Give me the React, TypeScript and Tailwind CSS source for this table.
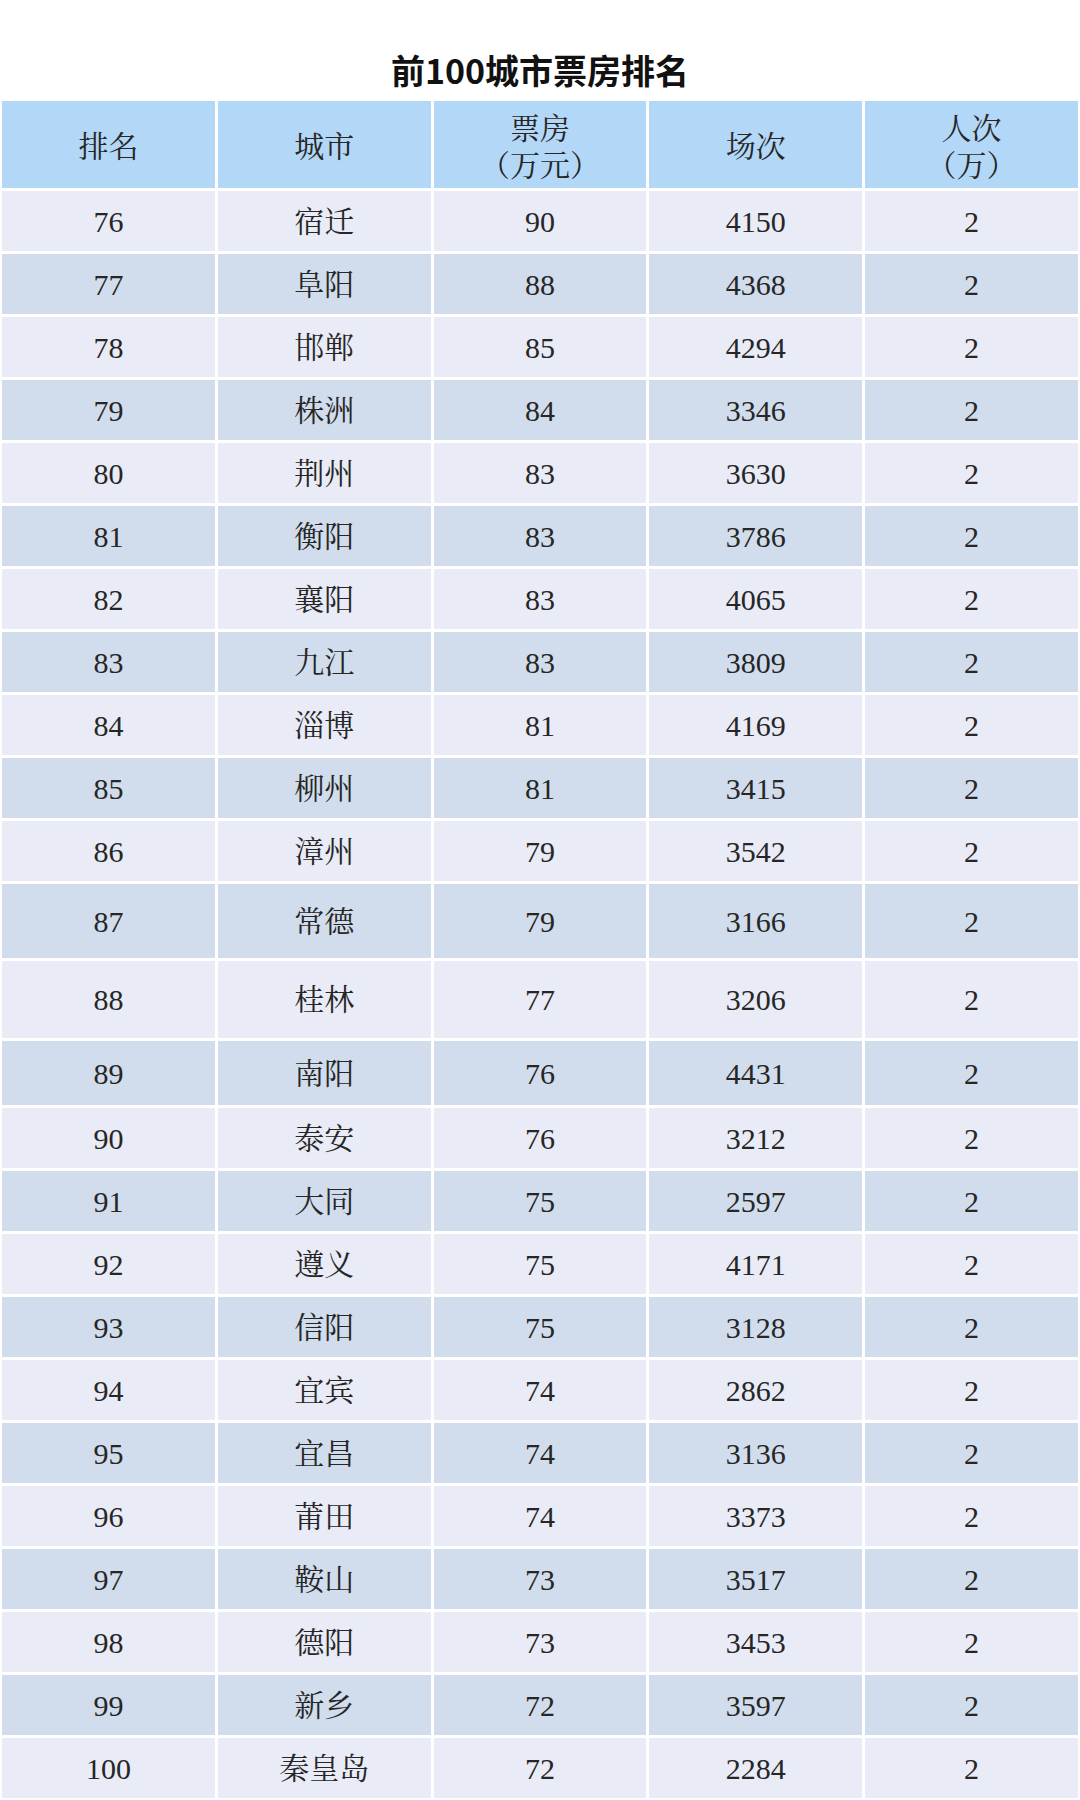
import React from "react";

type Row = { rank: string; city: string; box: string; shows: string; h: string };

const rows: Row[] = [
  { rank: "76", city: "宿迁", box: "90", shows: "4150", h: "h-[60px]" },
  { rank: "77", city: "阜阳", box: "88", shows: "4368", h: "h-[60px]" },
  { rank: "78", city: "邯郸", box: "85", shows: "4294", h: "h-[60px]" },
  { rank: "79", city: "株洲", box: "84", shows: "3346", h: "h-[60px]" },
  { rank: "80", city: "荆州", box: "83", shows: "3630", h: "h-[60px]" },
  { rank: "81", city: "衡阳", box: "83", shows: "3786", h: "h-[60px]" },
  { rank: "82", city: "襄阳", box: "83", shows: "4065", h: "h-[60px]" },
  { rank: "83", city: "九江", box: "83", shows: "3809", h: "h-[60px]" },
  { rank: "84", city: "淄博", box: "81", shows: "4169", h: "h-[60px]" },
  { rank: "85", city: "柳州", box: "81", shows: "3415", h: "h-[60px]" },
  { rank: "86", city: "漳州", box: "79", shows: "3542", h: "h-[60px]" },
  { rank: "87", city: "常德", box: "79", shows: "3166", h: "h-[74px]" },
  { rank: "88", city: "桂林", box: "77", shows: "3206", h: "h-[77px]" },
  { rank: "89", city: "南阳", box: "76", shows: "4431", h: "h-[64px]" },
  { rank: "90", city: "泰安", box: "76", shows: "3212", h: "h-[60px]" },
  { rank: "91", city: "大同", box: "75", shows: "2597", h: "h-[60px]" },
  { rank: "92", city: "遵义", box: "75", shows: "4171", h: "h-[60px]" },
  { rank: "93", city: "信阳", box: "75", shows: "3128", h: "h-[60px]" },
  { rank: "94", city: "宜宾", box: "74", shows: "2862", h: "h-[60px]" },
  { rank: "95", city: "宜昌", box: "74", shows: "3136", h: "h-[60px]" },
  { rank: "96", city: "莆田", box: "74", shows: "3373", h: "h-[60px]" },
  { rank: "97", city: "鞍山", box: "73", shows: "3517", h: "h-[60px]" },
  { rank: "98", city: "德阳", box: "73", shows: "3453", h: "h-[60px]" },
  { rank: "99", city: "新乡", box: "72", shows: "3597", h: "h-[60px]" },
  { rank: "100", city: "秦皇岛", box: "72", shows: "2284", h: "h-[60px]" },
];

const headers: string[][] = [["排名"], ["城市"], ["票房", "（万元）"], ["场次"], ["人次", "（万）"]];

export default function App() {
  return (
    <div className="w-[1080px] h-[1800px] bg-white overflow-hidden">
      <div className="pt-[50px] h-[101px]">
        <h1 className="h-[40px] leading-[40px] text-center text-[34px] font-bold text-[#111] font-['Noto_Sans_CJK_SC','Noto_Sans',sans-serif]">
          前100城市票房排名
        </h1>
      </div>
      <div className="flex flex-col gap-[3px] px-[2px] text-[30px] text-[#262626] font-normal font-['Liberation_Serif','Noto_Serif_CJK_SC','Noto_Sans_CJK_SC',serif]">
        <div className="grid grid-cols-5 gap-x-[3px] h-[87px]">
          {headers.map((lines, i) => (
            <div
              key={i}
              className="bg-[#b3d7f7] flex flex-col items-center justify-center leading-[37px] pt-[4px]"
            >
              {lines.map((l, j) => (
                <span key={j}>{l}</span>
              ))}
            </div>
          ))}
        </div>
        {rows.map((r, idx) => {
          const bg = idx % 2 === 0 ? "bg-[#e9ebf6]" : "bg-[#d1ddec]";
          return (
            <div key={r.rank} className={`grid grid-cols-5 gap-x-[3px] ${r.h}`}>
              {[r.rank, r.city, r.box, r.shows, "2"].map((v, j) => (
                <div key={j} className={`${bg} flex items-center justify-center`}>
                  {v}
                </div>
              ))}
            </div>
          );
        })}
      </div>
    </div>
  );
}
